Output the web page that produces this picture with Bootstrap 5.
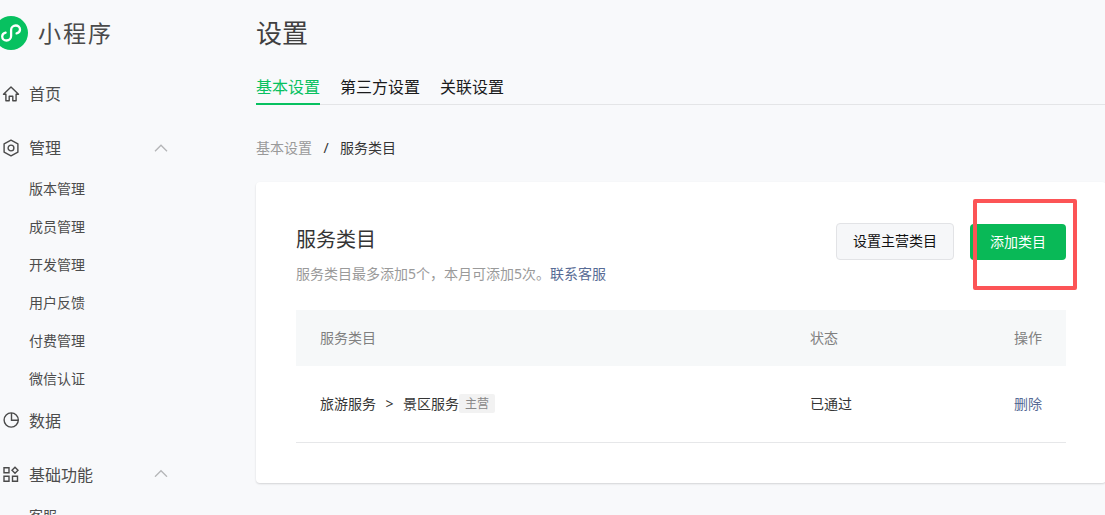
<!DOCTYPE html>
<html lang="zh-CN">
<head>
<meta charset="utf-8">
<meta name="viewport" content="width=device-width, initial-scale=1">
<title>小程序 - 设置</title>
<link href="https://cdn.jsdelivr.net/npm/bootstrap@5.3.0/dist/css/bootstrap.min.css" rel="stylesheet">
<style>
  body { background: #f8f9fb; color: #353535; font: 14px/20px "Noto Sans", "Noto Sans CJK SC", sans-serif; height: 515px; }
  a { text-decoration: none; }
  .side { width: 216px; height: 515px; color: #4c4c4c; }
  .brand-row { height: 66px; font-size: 23px; letter-spacing: 2px; color: #4a4a4a; margin-bottom: 6px; }
  .brand-row svg { margin-left: -6px; margin-right: 10px; }
  .menu-row { height: 44px; margin-bottom: 10px; font-size: 16px; padding-left: 2px; color: inherit; }
  .menu-row.opened { margin-bottom: 0; }
  .menu-row > svg:first-child { margin-right: 9px; }
  .menu-row .arrow { margin-left: auto; margin-right: 48px; }
  .sub-row { height: 38px; padding-left: 29px; color: inherit; }
  .sub-list { margin-bottom: 1px; }
  .content { width: 850px; margin-left: 40px; }
  .page-title { font-size: 26px; line-height: 66px; height: 68px; margin: 0; font-weight: 400; color: #404040; }
  .tabs { height: 37px; gap: 20px; font-size: 16px; border-bottom: 1px solid #e4e5e7; }
  .tabs a { color: #1a1b1c; padding: 7px 0 0; line-height: 24px; height: 37px; }
  .tabs a.active { color: #07c160; border-bottom: 2px solid #07c160; }
  .crumbs { height: 20px; margin: 33px 0 24px; }
  .crumbs a { color: #9a9a9a; }
  .crumbs .sep { width: 28px; text-align: center; }
  .panel { background: #fff; border-radius: 4px; height: 301px; padding: 40px 40px 0; box-shadow: 0 1px 2px rgba(0,0,0,.15); }
  .panel-head { height: 88px; }
  .panel-head h2 { font-size: 20px; line-height: 28px; margin: 4px 0 10px; font-weight: 400; }
  .hint { color: #9a9a9a; }
  .blue { color: #576b95; }
  .btn-plain, .btn-go { font-size: 14px; line-height: 20px; border-radius: 4px; padding: 0; }
  .btn-plain { width: 118px; height: 37px; margin-top: 1px; padding-bottom: 2px; color: #111; background: #f6f7f9; border: 1px solid #e2e3e6; }
  .btn-go { width: 96px; height: 36px; margin-top: 2px; color: #fff; background: #09b957; border: 0; }
  .focus-frame { left: 3px; top: -23px; width: 104px; height: 91px; border: 4px solid #fc5456; border-radius: 2px; pointer-events: none; }
  .list { width: 770px; table-layout: fixed; margin: 0; }
  .list th, .list td { font-weight: 400; padding: 0 24px; vertical-align: middle; }
  .list th { height: 56px; background: #f6f8f9; color: #808080; }
  .list td { height: 76px; border-bottom: 1px solid #e6e7e9; }
  .gt { width: 27px; text-align: center; }
  .tag-main { font-size: 12px; line-height: 19px; height: 19px; width: 36px; text-align: center; background: #f2f2f2; color: #888; border-radius: 2px; }
</style>
</head>
<body class="overflow-hidden">
<div class="d-flex">
  <aside class="side flex-shrink-0">
    <div class="brand-row d-flex align-items-center">
      <svg width="34" height="34" viewBox="0 0 34 34" class="flex-shrink-0"><circle cx="17" cy="17" r="17" fill="#07c160"/><path d="M11.6 16.6c-2 .5-3.4 1.9-3.4 3.9 0 2.3 1.9 4 4.3 4 2.5 0 4.6-1.9 4.6-4.4v-6.2c0-2.5 2.1-4.4 4.6-4.4 2.4 0 4.3 1.7 4.3 4 0 2-1.4 3.4-3.4 3.9" fill="none" stroke="#fff" stroke-width="2.3" stroke-linecap="round"/></svg>
      <span>小程序</span>
    </div>
    <a href="#" class="menu-row d-flex align-items-center">
      <svg width="18" height="18" viewBox="0 0 18 18" fill="none" stroke="#4a4a4a" stroke-width="1.4" stroke-linejoin="round"><path d="M9 1.9 1.5 9.3h2.4v6.5h3.3v-4.5h3.6v4.5h3.3V9.3h2.4z"/></svg>
      <span>首页</span>
    </a>
    <a href="#" class="menu-row opened d-flex align-items-center">
      <svg width="18" height="18" viewBox="0 0 18 18" fill="none" stroke="#4a4a4a" stroke-width="1.4" stroke-linejoin="round"><path d="m9 1.2 6.9 3.6v8.4L9 16.8l-6.9-3.6V4.8z"/><circle cx="9" cy="9" r="2.9"/></svg>
      <span>管理</span>
      <svg class="arrow" width="14" height="8" viewBox="0 0 14 8" fill="none" stroke="#b4b5b7" stroke-width="1.3"><path d="m1 7.2 6-6 6 6"/></svg>
    </a>
    <nav class="sub-list d-flex flex-column">
      <a href="#" class="sub-row d-flex align-items-center">版本管理</a>
      <a href="#" class="sub-row d-flex align-items-center">成员管理</a>
      <a href="#" class="sub-row d-flex align-items-center">开发管理</a>
      <a href="#" class="sub-row d-flex align-items-center">用户反馈</a>
      <a href="#" class="sub-row d-flex align-items-center">付费管理</a>
      <a href="#" class="sub-row d-flex align-items-center">微信认证</a>
    </nav>
    <a href="#" class="menu-row d-flex align-items-center">
      <svg width="18" height="18" viewBox="0 0 18 18" fill="none" stroke="#4a4a4a" stroke-width="1.4"><circle cx="9.2" cy="8" r="7.1"/><path d="M9.5.9v7.3h6.8"/></svg>
      <span>数据</span>
    </a>
    <a href="#" class="menu-row opened d-flex align-items-center">
      <svg width="18" height="18" viewBox="0 0 18 18" fill="none" stroke="#4a4a4a" stroke-width="1.4"><path d="M2 1.8h5v5H2zM2 10.3h5v5H2zM10.5 10.3h5v5h-5zM13 1.2l3 3-3 3-3-3z"/></svg>
      <span>基础功能</span>
      <svg class="arrow mb-1" width="14" height="8" viewBox="0 0 14 8" fill="none" stroke="#b4b5b7" stroke-width="1.3"><path d="m1 7.7 6-6 6 6"/></svg>
    </a>
    <a href="#" class="sub-row d-flex align-items-center">客服</a>
  </aside>

  <main class="content flex-shrink-0">
    <h1 class="page-title">设置</h1>
    <nav class="tabs d-flex">
      <a href="#" class="active">基本设置</a>
      <a href="#">第三方设置</a>
      <a href="#">关联设置</a>
    </nav>
    <div class="crumbs d-flex">
      <a href="#">基本设置</a><span class="sep">/</span><span>服务类目</span>
    </div>
    <section class="panel">
      <div class="panel-head d-flex justify-content-between">
        <div>
          <h2>服务类目</h2>
          <div class="hint">服务类目最多添加5个，本月可添加5次。<a href="#" class="blue">联系客服</a></div>
        </div>
        <div class="d-flex align-items-start gap-3">
          <button class="btn btn-plain">设置主营类目</button>
          <div class="position-relative">
            <button class="btn btn-go d-block">添加类目</button>
            <span class="focus-frame position-absolute"></span>
          </div>
        </div>
      </div>
      <table class="list">
        <colgroup><col style="width:490px"><col style="width:180px"><col style="width:100px"></colgroup>
        <thead><tr><th>服务类目</th><th>状态</th><th class="text-end">操作</th></tr></thead>
        <tbody><tr>
          <td><div class="d-flex align-items-center"><span>旅游服务</span><span class="gt">&gt;</span><span>景区服务</span><span class="tag-main">主营</span></div></td>
          <td>已通过</td>
          <td class="text-end"><a href="#" class="blue">删除</a></td>
        </tr></tbody>
      </table>
    </section>
  </main>
</div>
<script src="https://cdn.jsdelivr.net/npm/bootstrap@5.3.0/dist/js/bootstrap.bundle.min.js"></script>
</body>
</html>
